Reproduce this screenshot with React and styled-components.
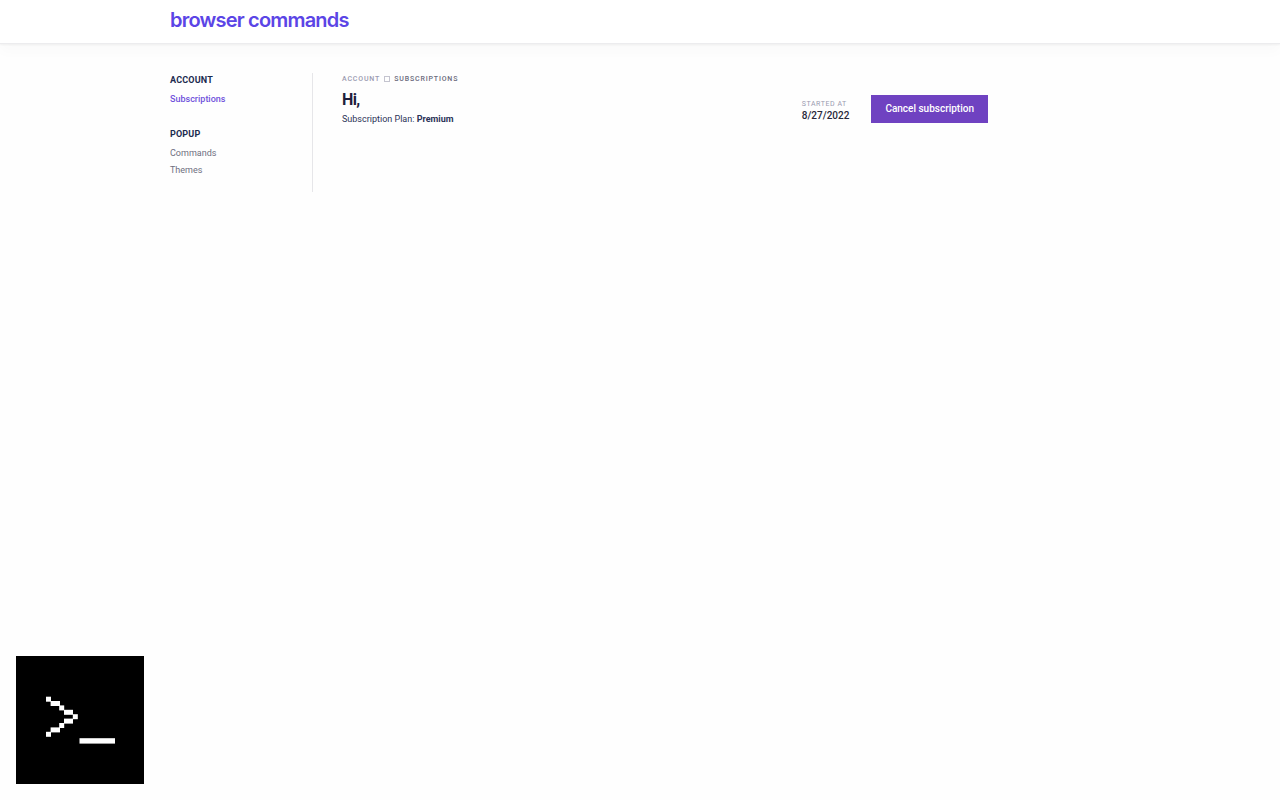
import React from 'react';
import styled, { createGlobalStyle } from 'styled-components';

const GlobalStyle = createGlobalStyle`
  * {
    box-sizing: border-box;
  }

  body {
    margin: 0;
    background: #fefefe;
    color: #1f1f3d;
    font-family: Roboto, sans-serif;
    font-size: 9px;
  }
`;

const Header = styled.header`
  background: #fff;
  border-bottom: 1px solid #ececee;
  box-shadow: 0 1px 2px rgba(0, 0, 0, 0.05), 0 8px 12px rgba(0, 0, 0, 0.02);
`;

const Container = styled.div`
  max-width: 980px;
  margin: 0 auto;
  padding: 0 20px;
`;

const Brand = styled.a`
  display: inline-block;
  padding: 8px 0 11px;
  color: #5b45e6;
  font-family: Inter, sans-serif;
  font-size: 20px;
  font-weight: 600;
  line-height: 24px;
  letter-spacing: -0.04em;
  text-decoration: none;
`;

const Layout = styled(Container)`
  display: grid;
  grid-template-columns: 143px minmax(0, 675px);
  padding-top: 29px;
`;

const Sidebar = styled.nav`
  display: flex;
  flex-direction: column;
  gap: 19px;
  padding-bottom: 13px;
  border-right: 1px solid #e6e6e9;
`;

const SidebarTitle = styled.h2`
  margin: 0 0 4px;
  color: #1b2b4f;
  font-size: 9px;
  font-weight: 700;
  line-height: 14px;
  letter-spacing: 0.02em;
  text-transform: uppercase;
`;

const SidebarList = styled.ul`
  margin: 0;
  padding: 0;
  list-style: none;
`;

const SidebarLink = styled.a`
  display: block;
  color: ${props => (props.$active ? '#7052dc' : '#6e6e80')};
  font-size: 9px;
  font-weight: ${props => (props.$active ? 500 : 400)};
  line-height: 17px;
  text-decoration: none;
`;

const Main = styled.main`
  padding-left: 29px;
`;

const Breadcrumb = styled.nav`
  display: flex;
  align-items: center;
  gap: 4px;
  color: #6a6a7c;
  font-size: 7px;
  font-weight: 500;
  line-height: 12px;
  letter-spacing: 0.12em;
  text-transform: uppercase;
`;

const BreadcrumbLink = styled.a`
  color: #9a9ab0;
  text-decoration: none;
`;

const Separator = styled.span`
  width: 6px;
  height: 6px;
  border: 1px solid #c4c4cf;
`;

const Summary = styled.div`
  display: flex;
  align-items: flex-end;
  justify-content: space-between;
  padding-top: 5px;
`;

const Greeting = styled.h1`
  margin: 0;
  font-size: 16px;
  font-weight: 700;
  line-height: 20px;
  letter-spacing: -0.04em;
`;

const Plan = styled.p`
  margin: 0;
  color: #2b3357;
  font-size: 9px;
  line-height: 18px;
`;

const Actions = styled.div`
  display: flex;
  align-items: flex-end;
  gap: 22px;
  padding-bottom: 5px;
`;

const Started = styled.dl`
  margin: 0;
`;

const StartedLabel = styled.dt`
  color: #9a9ab0;
  font-size: 7px;
  line-height: 10px;
  letter-spacing: 0.08em;
  text-transform: uppercase;
`;

const StartedDate = styled.dd`
  margin: 0;
  color: #28283a;
  font-size: 10px;
  font-weight: 500;
  line-height: 14px;
`;

const CancelButton = styled.button`
  padding: 7px 14px;
  border: 0;
  background: #6f42c1;
  color: #fff;
  font-family: inherit;
  font-size: 10px;
  font-weight: 500;
  line-height: 14px;
  cursor: pointer;
`;

// stays in the corner on top of the page
const TerminalBadge = styled.div`
  position: fixed;
  left: 16px;
  bottom: 16px;
  width: 128px;
  height: 128px;
  background: #000;

  svg {
    display: block;
  }
`;

const menu = [
  {
    title: 'Account',
    links: [{ label: 'Subscriptions', href: '#subscriptions', active: true }],
  },
  {
    title: 'Popup',
    links: [
      { label: 'Commands', href: '#commands' },
      { label: 'Themes', href: '#themes' },
    ],
  },
];

function TerminalIcon() {
  return (
    <svg width="128" height="128" viewBox="0 0 128 128" fill="#fff" aria-hidden="true">
      <rect x="30" y="40.7" width="5" height="5" />
      <rect x="34.6" y="45" width="9.4" height="5" />
      <rect x="43.2" y="49.4" width="5" height="5" />
      <rect x="48" y="53.8" width="9" height="5" />
      <rect x="56.8" y="58.2" width="5" height="5" />
      <rect x="48" y="62.6" width="9" height="5" />
      <rect x="43.2" y="67" width="5" height="5" />
      <rect x="34.6" y="71.4" width="9.4" height="5" />
      <rect x="30" y="75.8" width="5" height="5" />
      <rect x="63.5" y="82.2" width="35.5" height="5.4" />
    </svg>
  );
}

const App = () => {
  return (
    <>
      <GlobalStyle />
      <Header>
        <Container>
          <Brand href="#home">browser commands</Brand>
        </Container>
      </Header>

      <Layout>
        <Sidebar>
          {menu.map(group => (
            <section key={group.title}>
              <SidebarTitle>{group.title}</SidebarTitle>
              <SidebarList>
                {group.links.map(link => (
                  <li key={link.label}>
                    <SidebarLink href={link.href} $active={link.active}>
                      {link.label}
                    </SidebarLink>
                  </li>
                ))}
              </SidebarList>
            </section>
          ))}
        </Sidebar>

        <Main>
          <Breadcrumb>
            <BreadcrumbLink href="#account">Account</BreadcrumbLink>
            <Separator />
            <span>Subscriptions</span>
          </Breadcrumb>
          <Summary>
            <div>
              <Greeting>Hi,</Greeting>
              <Plan>
                Subscription Plan: <strong>Premium</strong>
              </Plan>
            </div>
            <Actions>
              <Started>
                <StartedLabel>Started at</StartedLabel>
                <StartedDate>8/27/2022</StartedDate>
              </Started>
              <CancelButton type="button">Cancel subscription</CancelButton>
            </Actions>
          </Summary>
        </Main>
      </Layout>

      <TerminalBadge>
        <TerminalIcon />
      </TerminalBadge>
    </>
  );
};

export default App;
